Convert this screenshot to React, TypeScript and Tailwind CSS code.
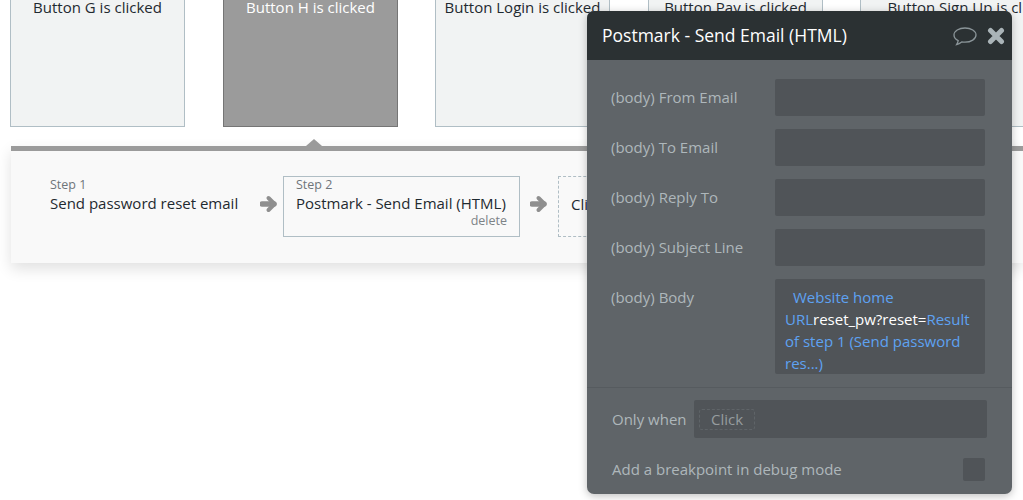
const font = { fontFamily: '"Open Sans", sans-serif' }

const cards = [
  { label: 'Button G is clicked', cls: 'ml-[10px] w-[175px] border-[#b0bec5] bg-[#f1f3f3] text-[#1f2a30]' },
  { label: 'Button H is clicked', cls: 'ml-[38px] w-[175px] border-[#757575] bg-[#9b9b9b] text-white' },
  { label: 'Button Login is clicked', cls: 'ml-[37px] w-[175px] border-[#b0bec5] bg-[#f1f3f3] text-[#1f2a30]' },
  { label: 'Button Pay is clicked', cls: 'ml-[38px] w-[175px] border-[#b0bec5] bg-[#f1f3f3] text-[#1f2a30]' },
  { label: 'Button Sign Up is clicked', cls: 'ml-[37px] w-[226px] border-[#b0bec5] bg-[#f1f3f3] text-[#1f2a30]' },
]

const fields = ['(body) From Email', '(body) To Email', '(body) Reply To', '(body) Subject Line']

function Arrow({ className }: { className: string }) {
  return (
    <svg width="18" height="18" viewBox="0 0 18 18" fill="none" className={`shrink-0 ${className}`}>
      <path d="M2 9H14" stroke="#8f8f8f" strokeWidth="5.5" strokeLinecap="round" />
      <path d="M8.5 3L14.5 9L8.5 15" stroke="#8f8f8f" strokeWidth="4" strokeLinecap="round" strokeLinejoin="round" />
    </svg>
  )
}

function PropertyEditor() {
  return (
    <div className="absolute left-[587px] top-[11px] flex h-[483px] w-[425px] flex-col rounded-[7px] bg-[#5f6468] shadow-[0_2px_8px_rgba(0,0,0,0.25)]">
      <div className="flex h-[49px] shrink-0 items-center rounded-t-[7px] bg-[#2b3133] pl-[15px] pr-[7px]">
        <span className="flex-1 text-[17.5px] font-normal text-white">Postmark - Send Email (HTML)</span>
        <svg width="24" height="20" viewBox="0 0 24 20" fill="none" className="mr-[10px] mt-[2px]">
          <path
            d="M12 1C5.900 1 1 4 1 8c0 2.400 1.600 4.400 4.200 5.700-.2 1.400-.8 2.600-1.600 3.800 2-.4 3.700-1.400 5.100-2.600 1 .2 2.100.3 3.300.3 6.100 0 11-3.200 11-7.200S18.100 1 12 1Z"
            stroke="#8b9599"
            strokeWidth="1.3"
          />
        </svg>
        <svg width="18" height="18" viewBox="0 0 18 18" fill="none" className="mt-[1px]">
          <path d="M3.500 3.500L14.500 14.500M14.500 3.500L3.500 14.500" stroke="#aab4b8" strokeWidth="5" strokeLinecap="round" />
        </svg>
      </div>
      <div className="flex flex-col gap-[13px] pl-[24px] pr-[27px] pt-[19px]">
        {fields.map((f) => (
          <div key={f} className="flex items-center">
            <span className="w-[164px] text-[15px] text-[#aeb7bb]">{f}</span>
            <div className="h-[37px] flex-1 rounded-[2px] bg-[#505458]" />
          </div>
        ))}
        <div className="flex items-start">
          <span className="w-[164px] pt-[8px] text-[15px] leading-[20px] text-[#aeb7bb]">(body) Body</span>
          <div className="h-[95px] flex-1 overflow-hidden rounded-[2px] bg-[#505458] px-[10px] pt-[7px] text-[15px] leading-[22px] text-[#5ea2f2]">
            <span className="ml-[8px]">Website home</span> URL<span className="text-white">reset_pw?reset=</span>Result of step 1 (Send password res...)
          </div>
        </div>
      </div>
      <div className="mt-[13px] border-t border-[#565b5f] pl-[25px] pr-[25px] pt-[12px]">
        <div className="flex items-center">
          <span className="w-[82px] text-[15px] text-[#aeb7bb]">Only when</span>
          <div className="flex h-[38px] flex-1 items-center rounded-[2px] bg-[#505458] pl-[5px]">
            <span className="rounded-[3px] border border-dashed border-[#5f6468] px-[11px] text-[15px] leading-[19px] text-[#969c9f]">Click</span>
          </div>
        </div>
        <div className="mt-[20px] flex items-center justify-between pr-[2px]">
          <span className="text-[15px] text-[#aeb7bb]">Add a breakpoint in debug mode</span>
          <div className="h-[23px] w-[22px] rounded-[2px] bg-[#505458]" />
        </div>
      </div>
    </div>
  )
}

export default function App() {
  return (
    <div style={font} className="relative h-[500px] w-[1023px] overflow-hidden bg-white">
      <div className="flex h-[127px] items-start">
        {cards.map((c) => (
          <div key={c.label} className={`h-[127px] shrink-0 border border-t-0 text-center text-[15px] leading-[15px] ${c.cls}`}>
            {c.label}
          </div>
        ))}
      </div>

      <div className="relative ml-[11px] mt-[19px] h-[117px] border-t-[5px] border-[#9b9b9b] bg-[#f9f9f9] shadow-[0_6px_14px_rgba(0,0,0,0.12)]">
        <div className="absolute left-[295px] top-[-12px] h-0 w-0 border-x-[8px] border-b-[7px] border-x-transparent border-b-[#9b9b9b]" />
        <div className="flex items-start pl-[39px] pt-[25px] text-[#1f2a30]">
          <div className="w-[210px] pt-[1px]">
            <div className="text-[12.5px] leading-[16px] text-[#6f7579]">Step 1</div>
            <div className="text-[15px] leading-[20px]">Send password reset email</div>
          </div>
          <Arrow className="mt-[19px]" />
          <div className="ml-[5px] h-[61px] w-[237px] shrink-0 border border-[#b0bec5] px-[12px]">
            <div className="text-[12.5px] leading-[16px] text-[#6f7579]">Step 2</div>
            <div className="text-[15px] leading-[20px]">Postmark - Send Email (HTML)</div>
            <div className="text-right text-[12.5px] leading-[16px] text-[#7d8387]">delete</div>
          </div>
          <Arrow className="ml-[10px] mt-[19px]" />
          <div className="ml-[10px] flex h-[61px] w-[200px] shrink-0 items-center whitespace-nowrap border border-dashed border-[#b0bec5] pb-[4px] pl-[12px] text-[15px]">
            Click here to add an action...
          </div>
        </div>
      </div>

      <PropertyEditor />
    </div>
  )
}
